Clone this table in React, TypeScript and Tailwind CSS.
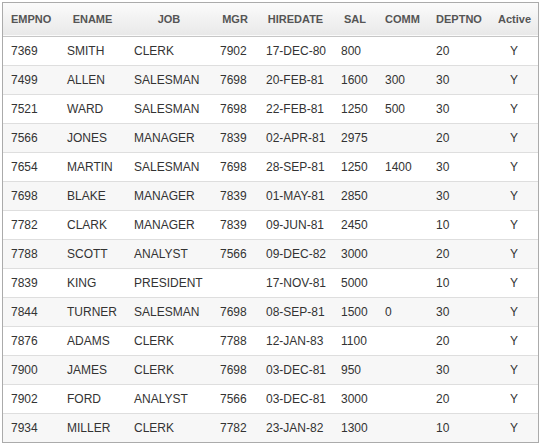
import React from 'react';

type Emp = {
  empno: string;
  ename: string;
  job: string;
  mgr: string;
  hiredate: string;
  sal: string;
  comm: string;
  deptno: string;
  active: string;
};

const rows: Emp[] = [
  { empno: '7369', ename: 'SMITH', job: 'CLERK', mgr: '7902', hiredate: '17-DEC-80', sal: '800', comm: '', deptno: '20', active: 'Y' },
  { empno: '7499', ename: 'ALLEN', job: 'SALESMAN', mgr: '7698', hiredate: '20-FEB-81', sal: '1600', comm: '300', deptno: '30', active: 'Y' },
  { empno: '7521', ename: 'WARD', job: 'SALESMAN', mgr: '7698', hiredate: '22-FEB-81', sal: '1250', comm: '500', deptno: '30', active: 'Y' },
  { empno: '7566', ename: 'JONES', job: 'MANAGER', mgr: '7839', hiredate: '02-APR-81', sal: '2975', comm: '', deptno: '20', active: 'Y' },
  { empno: '7654', ename: 'MARTIN', job: 'SALESMAN', mgr: '7698', hiredate: '28-SEP-81', sal: '1250', comm: '1400', deptno: '30', active: 'Y' },
  { empno: '7698', ename: 'BLAKE', job: 'MANAGER', mgr: '7839', hiredate: '01-MAY-81', sal: '2850', comm: '', deptno: '30', active: 'Y' },
  { empno: '7782', ename: 'CLARK', job: 'MANAGER', mgr: '7839', hiredate: '09-JUN-81', sal: '2450', comm: '', deptno: '10', active: 'Y' },
  { empno: '7788', ename: 'SCOTT', job: 'ANALYST', mgr: '7566', hiredate: '09-DEC-82', sal: '3000', comm: '', deptno: '20', active: 'Y' },
  { empno: '7839', ename: 'KING', job: 'PRESIDENT', mgr: '', hiredate: '17-NOV-81', sal: '5000', comm: '', deptno: '10', active: 'Y' },
  { empno: '7844', ename: 'TURNER', job: 'SALESMAN', mgr: '7698', hiredate: '08-SEP-81', sal: '1500', comm: '0', deptno: '30', active: 'Y' },
  { empno: '7876', ename: 'ADAMS', job: 'CLERK', mgr: '7788', hiredate: '12-JAN-83', sal: '1100', comm: '', deptno: '20', active: 'Y' },
  { empno: '7900', ename: 'JAMES', job: 'CLERK', mgr: '7698', hiredate: '03-DEC-81', sal: '950', comm: '', deptno: '30', active: 'Y' },
  { empno: '7902', ename: 'FORD', job: 'ANALYST', mgr: '7566', hiredate: '03-DEC-81', sal: '3000', comm: '', deptno: '20', active: 'Y' },
  { empno: '7934', ename: 'MILLER', job: 'CLERK', mgr: '7782', hiredate: '23-JAN-82', sal: '1300', comm: '', deptno: '10', active: 'Y' },
];

const columns: { key: keyof Emp; label: string; width: string }[] = [
  { key: 'empno', label: 'EMPNO', width: 'w-[56px]' },
  { key: 'ename', label: 'ENAME', width: 'w-[67px]' },
  { key: 'job', label: 'JOB', width: 'w-[86px]' },
  { key: 'mgr', label: 'MGR', width: 'w-[46px]' },
  { key: 'hiredate', label: 'HIREDATE', width: 'w-[75px]' },
  { key: 'sal', label: 'SAL', width: 'w-[44px]' },
  { key: 'comm', label: 'COMM', width: 'w-[51px]' },
  { key: 'deptno', label: 'DEPTNO', width: 'w-[62px]' },
  { key: 'active', label: 'Active', width: 'w-[48px]' },
];

export default function App() {
  return (
    <div className="bg-white w-[541px] h-[446px] pt-[2px] pl-[2px] font-['Liberation_Sans',Arial,sans-serif]">
      <div className="w-[537px] border border-[#ababab] overflow-hidden">
        <table className="w-full table-fixed border-collapse">
          <colgroup>
            {columns.map((col) => <col key={col.key} className={col.width} />)}
          </colgroup>
          <thead>
            <tr className="bg-gradient-to-b from-[#fbfbfb] to-[#e9e9e9] border-b border-[#c6c6c6]">
              {columns.map((col) => (
                <th key={col.key} className="h-[33px] px-2 py-0 text-center text-[11px] font-bold text-[#555] whitespace-nowrap">
                  {col.label}
                </th>
              ))}
            </tr>
          </thead>
          <tbody>
            {rows.map((row, i) => (
              <tr key={row.empno} className={`${i % 2 === 1 ? 'bg-[#f7f7f7]' : 'bg-white'} ${i < rows.length - 1 ? 'border-b border-[#dedede]' : ''}`}>
                {columns.map((col) => (
                  <td
                    key={col.key}
                    className={`h-[29px] px-2 py-0 text-[12px] text-[#333] whitespace-nowrap ${col.key === 'active' ? 'text-center' : 'text-left'}`}
                  >
                    {row[col.key]}
                  </td>
                ))}
              </tr>
            ))}
          </tbody>
        </table>
      </div>
    </div>
  );
}
